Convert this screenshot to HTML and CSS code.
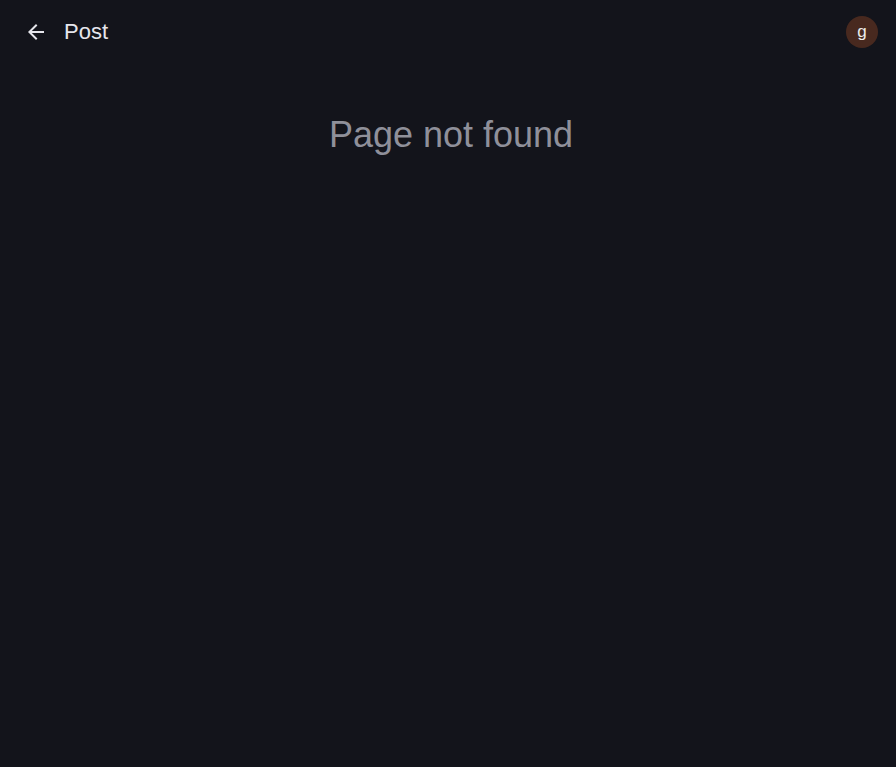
FILE: index.html
```html
<!DOCTYPE html>
<html lang="en">
<head>
    <meta charset="UTF-8">
    <meta name="viewport" content="width=device-width, initial-scale=1.0">
    <title>Post</title>
    <link rel="stylesheet" href="styles.css">
</head>
<body>

<header class="topbar">
    <button class="back" aria-label="Back">
        <svg width="24" height="24" viewBox="0 0 24 24"><path d="M20 11H7.83l5.59-5.59L12 4l-8 8 8 8 1.41-1.41L7.83 13H20v-2z" fill="currentColor"/></svg>
    </button>
    <h1 class="title">Post</h1>
    <div class="avatar">g</div>
</header>

<main class="content">
    <h2 class="not-found">Page not found</h2>
</main>

</body>
</html>
```

FILE: styles.css
```css
body {
    font-family: 'Liberation Sans', Arial, sans-serif;
    background-color: #13141b;
    margin: 0;
    padding: 0;
    color: #e6e6ec;
    min-height: 100vh;
}
.topbar {
    height: 64px;
    display: flex;
    align-items: center;
    padding: 0 18px 0 24px;
}
.back {
    width: 24px;
    height: 24px;
    padding: 0;
    border: none;
    background: none;
    color: #e6e6ec;
    display: flex;
    cursor: pointer;
}
.title {
    margin: 0 0 0 16px;
    font-size: 22px;
    font-weight: normal;
    flex: 1;
}
.avatar {
    width: 32px;
    height: 32px;
    border-radius: 50%;
    background-color: #48291f;
    color: #ececec;
    font-size: 17px;
    display: flex;
    align-items: center;
    justify-content: center;
}
.content {
    text-align: center;
    padding-top: 50px;
}
.not-found {
    margin: 0;
    padding-left: 6px;
    font-size: 36px;
    font-weight: normal;
    color: #8f909a;
}
```
